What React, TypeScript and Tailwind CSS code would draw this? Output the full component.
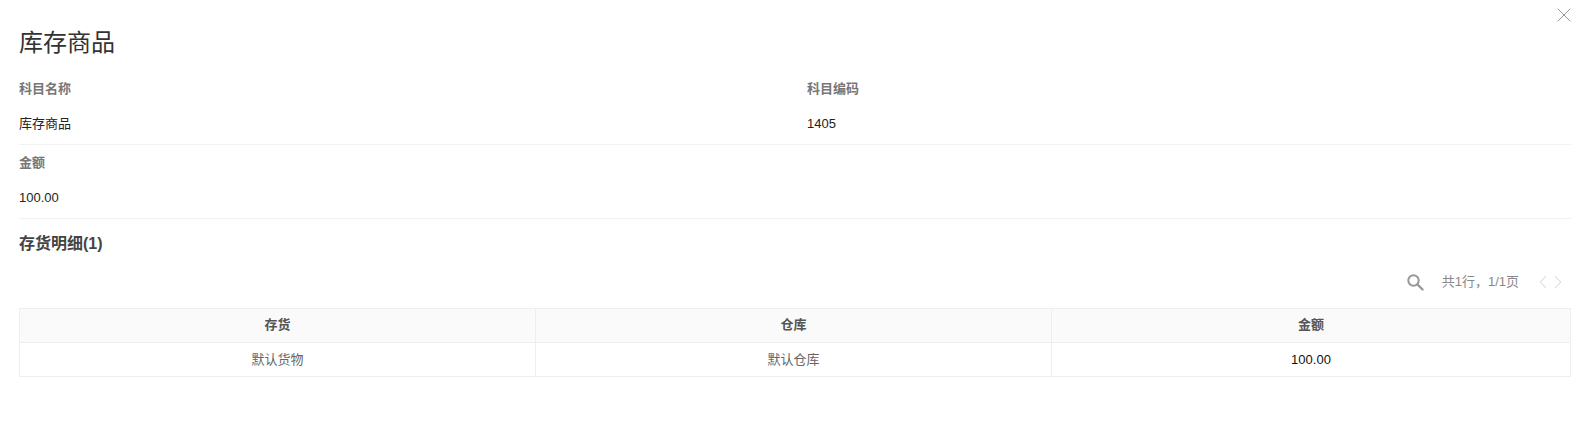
import React from 'react';
import { X, ChevronLeft, ChevronRight } from 'lucide-react';

const fontStack = "font-['Liberation_Sans','Noto_Sans_CJK_SC',sans-serif]";

const Field: React.FC<{ label: string; value: string; className?: string }> = ({ label, value, className }) => (
  <div className={className}>
    <div className="h-[38px] pt-[9px] text-[13px] leading-[18px] font-bold text-[#777]">{label}</div>
    <div className="h-[35px] pt-[6px] text-[13px] leading-[18px] text-[#222]">{value}</div>
  </div>
);

const columns = [
  { title: '存货', value: '默认货物', width: 'w-[516px] border-r border-[#eee]', color: 'text-[#666]' },
  { title: '仓库', value: '默认仓库', width: 'w-[516px] border-r border-[#eee]', color: 'text-[#666]' },
  { title: '金额', value: '100.00', width: 'flex-1', color: 'text-[#111]' },
];

const App: React.FC = () => {
  return (
    <div className={`relative h-[429px] w-[1584px] overflow-hidden bg-white pl-[19px] pr-[13px] ${fontStack}`}>
      <button className="absolute top-[3px] right-[8px] text-[#999]">
        <X size={24} strokeWidth={1} />
      </button>

      <h1 className="h-[71px] pt-[25px] text-[24px] leading-[36px] font-normal text-[#333]">库存商品</h1>

      <div className="flex border-b border-[#f2f2f2]">
        <Field label="科目名称" value="库存商品" className="w-[788px]" />
        <Field label="科目编码" value="1405" />
      </div>
      <div className="border-b border-[#f2f2f2]">
        <Field label="金额" value="100.00" />
      </div>

      <h2 className="h-[50px] pt-[13px] text-[16px] leading-[24px] font-bold text-[#444]">存货明细(1)</h2>

      <div className="flex h-[39px] items-start justify-end pr-[1px] text-[13px] text-[#888]">
        <svg width="18" height="18" viewBox="0 0 18 18" fill="none" stroke="#999" className="mt-[4px] mr-[18px]">
          <circle cx="7.5" cy="7.5" r="5.2" strokeWidth="2" />
          <path d="M11.5 11.5 L16.5 16.5" strokeWidth="2.4" strokeLinecap="round" />
        </svg>
        <span className="mt-[4px] leading-[18px]">共1行，1/1页</span>
        <span className="ml-[13px] mr-[1px] mt-[2px] flex text-[#d5d5d5]">
          <ChevronLeft size={22} strokeWidth={1.1} className="-mr-[7px]" />
          <ChevronRight size={22} strokeWidth={1.1} />
        </span>
      </div>

      <div className="border border-[#eee] text-[13px]">
        <div className="flex h-[34px] border-b border-[#eee] bg-[#fafafa]">
          {columns.map((c) => (
            <div key={c.title} className={`flex items-center justify-center pb-[1px] font-bold text-[#555] ${c.width}`}>
              {c.title}
            </div>
          ))}
        </div>
        <div className="flex h-[33px]">
          {columns.map((c) => (
            <div key={c.title} className={`flex items-center justify-center ${c.width} ${c.color}`}>
              {c.value}
            </div>
          ))}
        </div>
      </div>
    </div>
  );
};

export default App;
